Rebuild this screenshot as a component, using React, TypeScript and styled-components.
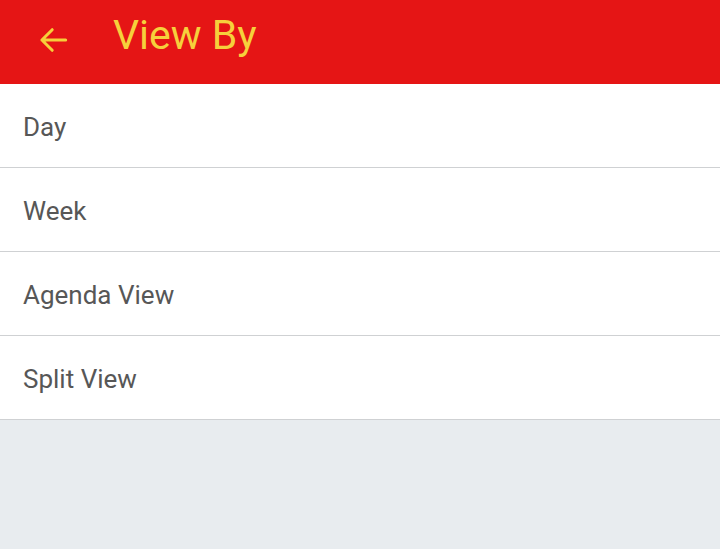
import React from "react";
import styled, { createGlobalStyle } from "styled-components";

const GlobalStyle = createGlobalStyle`
  html, body {
    margin: 0;
    padding: 0;
    background: #e8ecef;
    font-family: Roboto, "Liberation Sans", sans-serif;
  }
`;

const options = ["Day", "Week", "Agenda View", "Split View"];

const App = () => {
  return (
    <Page>
      <GlobalStyle />
      <Header>
        <BackButton aria-label="Back">
          <svg width="38" height="38" viewBox="0 0 24 24">
            <path
              d="M20 12H5M11.5 5.5L5 12l6.5 6.5"
              fill="none"
              stroke="#f6cf3a"
              strokeWidth="1.9"
              strokeLinecap="round"
              strokeLinejoin="round"
            />
          </svg>
        </BackButton>
        <Title>View By</Title>
      </Header>
      <List>
        {options.map((o) => (
          <Row key={o}>{o}</Row>
        ))}
      </List>
    </Page>
  );
};

export default App;

const Page = styled.div`
  width: 100%;
  min-height: 100vh;
  background: #e8ecef;
`;

const Header = styled.div`
  height: 84px;
  background: #e51515;
  display: flex;
  align-items: center;
  padding-left: 34px;
  box-sizing: border-box;
`;

const BackButton = styled.div`
  width: 38px;
  height: 38px;
  display: flex;
  margin-bottom: 4px;
`;

const Title = styled.h1`
  margin: 0 0 14px 41px;
  font-size: 41px;
  font-weight: 400;
  color: #f6d03c;
`;

const List = styled.div`
  background: #fff;
`;

const Row = styled.div`
  height: 80px;
  border-bottom: 1px solid #cfd1d3;
  display: flex;
  align-items: center;
  padding: 3px 0 0 23px;
  box-sizing: content-box;
  font-size: 26px;
  color: #575757;
`;
